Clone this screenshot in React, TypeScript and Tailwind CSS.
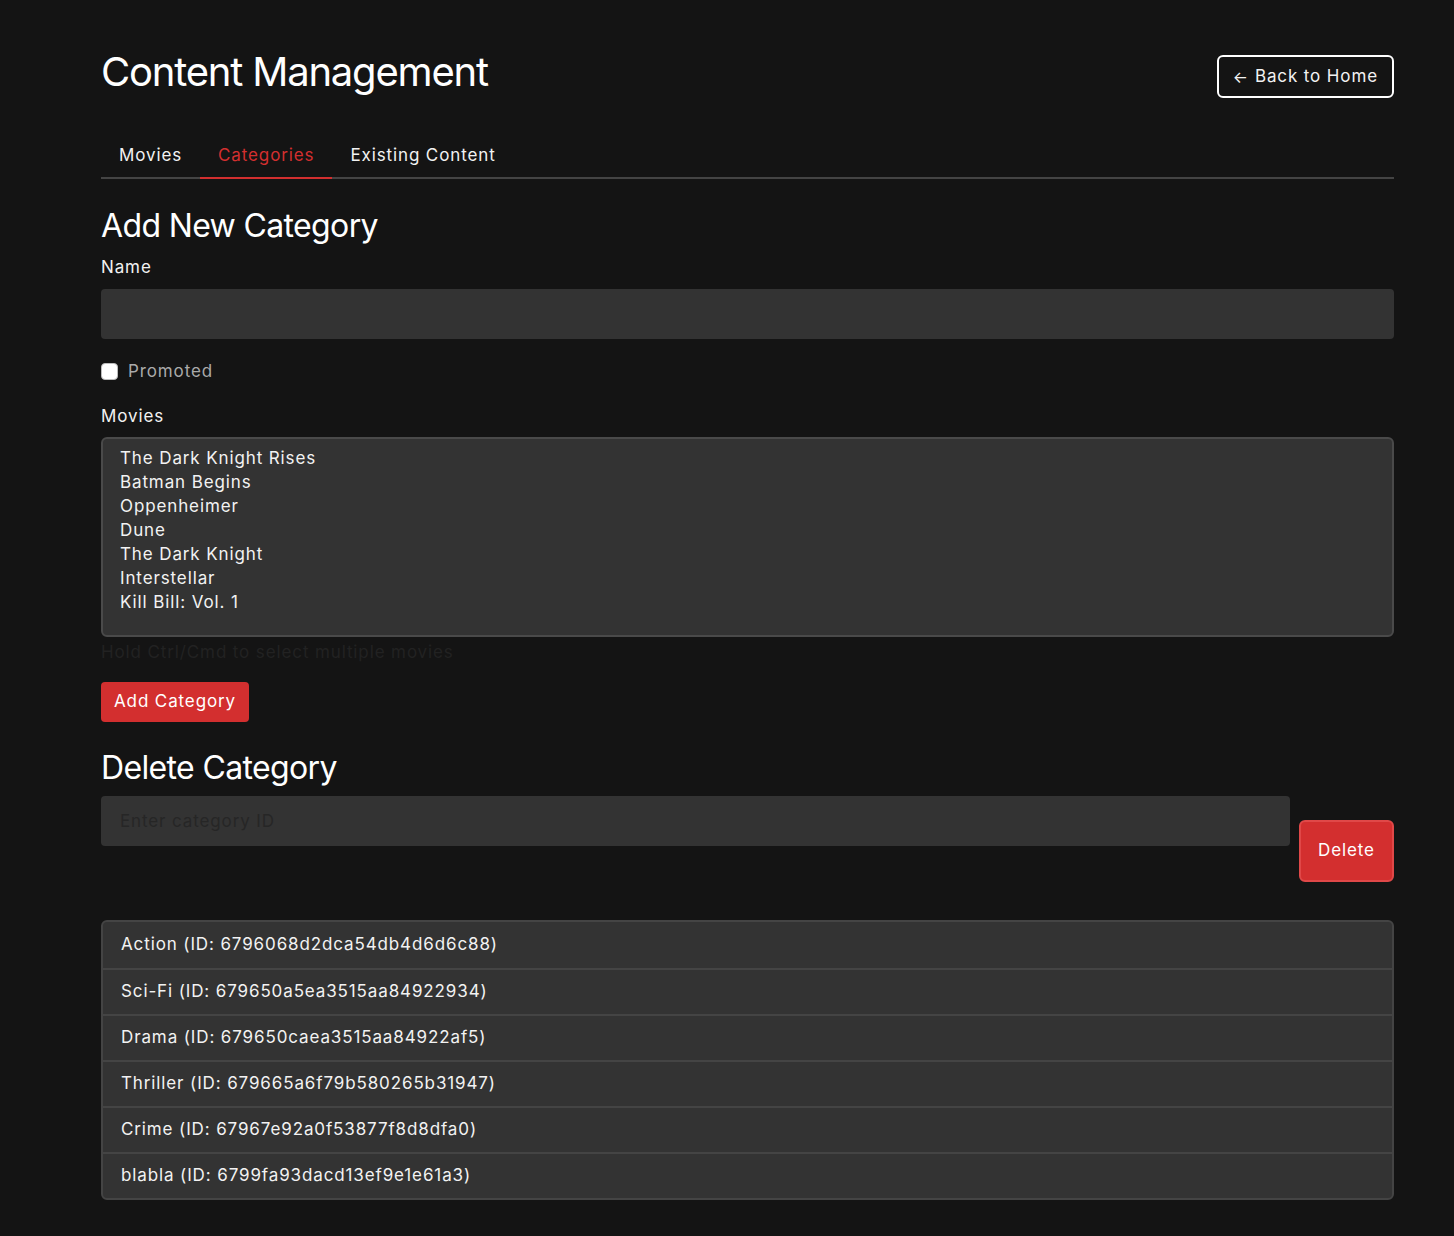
import { useState } from 'react';

const movies = [
  'The Dark Knight Rises',
  'Batman Begins',
  'Oppenheimer',
  'Dune',
  'The Dark Knight',
  'Interstellar',
  'Kill Bill: Vol. 1',
];

const categories = [
  { name: 'Action', id: '6796068d2dca54db4d6d6c88' },
  { name: 'Sci-Fi', id: '679650a5ea3515aa84922934' },
  { name: 'Drama', id: '679650caea3515aa84922af5' },
  { name: 'Thriller', id: '679665a6f79b580265b31947' },
  { name: 'Crime', id: '67967e92a0f53877f8d8dfa0' },
  { name: 'blabla', id: '6799fa93dacd13ef9e1e61a3' },
];

const tabs = ['Movies', 'Categories', 'Existing Content'];

export default function App() {
  const [activeTab, setActiveTab] = useState('Categories');
  const [name, setName] = useState('');
  const [promoted, setPromoted] = useState(false);
  const [deleteId, setDeleteId] = useState('');

  return (
    <div className="min-h-screen bg-[#141414] text-[#f2f2f2] font-['Inter','Liberation_Sans',sans-serif] tracking-[0.055em]">
      <div className="ml-[101px] w-[1293px] pt-[48px] pb-[38px]">
        <div className="flex items-start justify-between">
          <h1 className="text-[40px] leading-[48px] font-normal tracking-[-0.03em] text-white">Content Management</h1>
          <button className="mt-[7px] flex items-center gap-[7px] h-[43px] px-[14px] border-2 border-white rounded-[6px] text-[17px] text-[#f2f2f2]">
            <span className="text-[16px] tracking-normal">←</span>Back to Home
          </button>
        </div>

        <div className="mt-[45px] flex border-b-2 border-[#444]">
          {tabs.map(t => (
            <button
              key={t}
              onClick={() => setActiveTab(t)}
              className={`px-[18px] pb-[10px] text-[17px] leading-[24px] -mb-[2px] border-b-2 ${activeTab === t ? 'text-[#d32f2f] border-[#d32f2f]' : 'text-[#f2f2f2] border-transparent'}`}
            >
              {t}
            </button>
          ))}
        </div>

        <h2 className="mt-[27px] text-[32px] leading-[40px] tracking-[-0.02em] text-white">Add New Category</h2>

        <label className="block mt-[9px] text-[17px] leading-[24px]">Name</label>
        <input
          value={name}
          onChange={e => setName(e.target.value)}
          className="mt-[10px] block w-full h-[50px] rounded-[4px] bg-[#333] px-[19px] text-[17px] text-white outline-none"
        />

        <label className="mt-[20px] flex items-center gap-[10px] text-[17px] leading-[24px] text-[#aaa]">
          <input
            type="checkbox"
            checked={promoted}
            onChange={e => setPromoted(e.target.checked)}
            className="w-[17px] h-[17px] appearance-none rounded-[4px] bg-white border border-[#bbb]"
          />
          Promoted
        </label>

        <label className="block mt-[21px] text-[17px] leading-[24px]">Movies</label>
        <div className="mt-[9px] h-[200px] rounded-[6px] border-2 border-[#4a4a4a] bg-[#333] px-[17px] py-[7px] text-[17px] leading-[24px]">
          {movies.map(m => (
            <div key={m}>{m}</div>
          ))}
        </div>
        <p className="mt-[3px] text-[17px] leading-[24px] text-[#222]">Hold Ctrl/Cmd to select multiple movies</p>

        <button className="mt-[18px] h-[40px] px-[13px] rounded-[4px] bg-[#d32f2f] text-[17px] text-white">Add Category</button>

        <h2 className="mt-[26px] text-[32px] leading-[40px] tracking-[-0.02em] text-white">Delete Category</h2>
        <div className="mt-[8px] flex items-start gap-[9px]">
          <input
            value={deleteId}
            onChange={e => setDeleteId(e.target.value)}
            placeholder="Enter category ID"
            className="flex-1 h-[50px] rounded-[4px] bg-[#333] px-[19px] text-[17px] text-white placeholder:text-[#262626] outline-none"
          />
          <button className="mt-[24px] w-[95px] h-[62px] rounded-[6px] border-2 border-[#e04848] bg-[#d32f2f] text-[17px] text-white">Delete</button>
        </div>

        <div className="mt-[38px] rounded-[6px] border-2 border-[#444] bg-[#333] overflow-hidden">
          {categories.map((c, i) => (
            <div
              key={c.id}
              className={`h-[46px] flex items-center px-[18px] text-[17px] ${i > 0 ? 'border-t-2 border-[#444]' : ''}`}
            >
              {c.name} (ID: {c.id})
            </div>
          ))}
        </div>
      </div>
    </div>
  );
}
